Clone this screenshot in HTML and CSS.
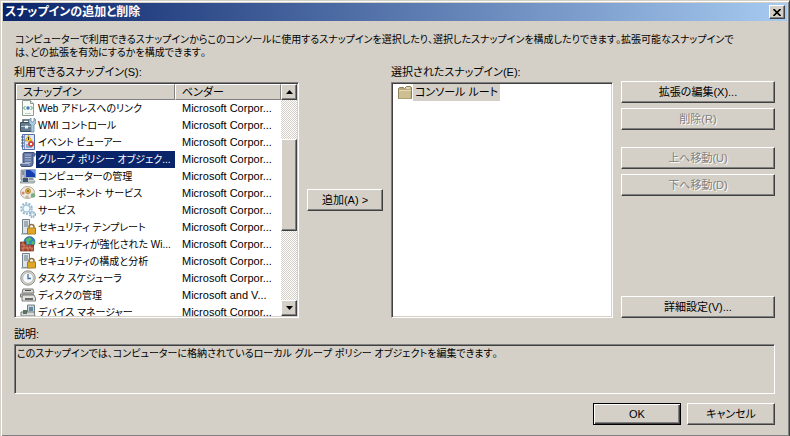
FILE: index.html
```html
<!DOCTYPE html>
<html lang="ja">
<head>
<meta charset="utf-8">
<title>スナップインの追加と削除</title>
<link rel="stylesheet" href="styles.css">
</head>
<body>
<main class="dialog">
  <header class="titlebar">
    <h1>スナップインの追加と削除</h1>
    <button class="close" type="button" aria-label="閉じる"><svg width="8" height="7" viewBox="0 0 8 7"><path d="M.5 0L7.500 7M7.500 0L.5 7" stroke="#000" stroke-width="1.600"/></svg></button>
  </header>
  <div class="content">
    <p class="intro">コンピューターで利用できるスナップインからこのコンソールに使用するスナップインを選択したり、選択したスナップインを構成したりできます。拡張可能なスナップインで<br>は、どの拡張を有効にするかを構成できます。</p>
    <div class="picker">
      <section class="available">
        <h2 id="available-label">利用できるスナップイン(S):</h2>
        <div class="sunken list">
          <div class="rows">
            <table aria-labelledby="available-label">
              <colgroup><col class="col-name"><col></colgroup>
              <thead><tr><th>スナップイン</th><th>ベンダー</th></tr></thead>
              <tbody>
                <tr><td><div class="item"><svg viewBox="0 0 16 16"><path d="M2.500.5h8l3 3v12h-11z" fill="#f7faf5" stroke="#8c9c94"/><path d="M10.500.5v3h3" fill="#dce8e0" stroke="#8c9c94"/><path d="M5.500 6L3.500 8l2 2M10.500 6l2 2-2 2" fill="none" stroke="#4b9a68"/><circle cx="8" cy="8" r="1.700" fill="#3979b8"/><path d="M5 13.500h6" stroke="#c5d1c9"/></svg><span>Web アドレスへのリンク</span></div></td><td>Microsoft Corpor...</td></tr>
                <tr><td><div class="item"><svg viewBox="0 0 16 16"><path d="M3 5V3h6v2" fill="none" stroke="#4b5963" stroke-width="1.500"/><path d="M.5 5.500h12v9H.5z" fill="#647b8e" stroke="#394c5b"/><path d="M1 9.500h11" stroke="#b6c8d4"/><path d="M5 8.500h3v3H5z" fill="#e7edf0"/><path d="M11 1v3l1.500 1L14 4V1l2 2v3l-2 2v7h-3V8L9 6V3z" fill="#a9cbe2" stroke="#587b94" stroke-width=".7"/></svg><span>WMI コントロール</span></div></td><td>Microsoft Corpor...</td></tr>
                <tr><td><div class="item"><svg viewBox="0 0 16 16"><path d="M2.500.5h12v15h-12z" fill="#dce6f7" stroke="#536fa8"/><path d="M4.500 1v14" stroke="#8097cb"/><path d="M1 3h3M1 6h3M1 9h3M1 12h3" stroke="#535f79"/><path d="M8.500 1.500L12 7H5z" fill="#ffd52d" stroke="#bc8c13" stroke-width=".7"/><path d="M8.500 3v3" stroke="#413100"/><circle cx="11" cy="10" r="3" fill="#d64536"/><path d="M10 9l2 2m0-2l-2 2" stroke="#fff"/><path d="M6 11h2M6 13h6" stroke="#466fad"/></svg><span>イベント ビューアー</span></div></td><td>Microsoft Corpor...</td></tr>
                <tr class="selected"><td><div class="item"><svg viewBox="0 0 16 16"><path d="M4 1.500h10q2 1 1 3h-2v8q0 3-3 3H1.500q-1.500-1-.5-3h2V3q0-1 1-1.500z" fill="#6577a3" stroke="#3d4f7b"/><path d="M5 4h6M5 6.500h6M5 9h6M5 11.500h6" stroke="#a7b6d2"/><path d="M1 12.500h8v2" fill="none" stroke="#b3bed4"/><path d="M13 2v3h2" fill="#8796b8" stroke="#435680"/></svg><span>グループ ポリシー オブジェク...</span></div></td><td>Microsoft Corpor...</td></tr>
                <tr><td><div class="item"><svg viewBox="0 0 16 16"><path d="M1 2h4v10H1z" fill="#bbc4ca" stroke="#67747b" stroke-width=".7"/><path d="M2 4h2M2 6h2" stroke="#4f616c"/><path d="M5.500 1.500h10v8h-10z" fill="#173eaf" stroke="#a3acb5"/><path d="M10 2h5v4z" fill="#6b96ed"/><path d="M9 10h4l1 2H8z" fill="#899aa2"/><path d="M1 13h14l-1 2H0z" fill="#cdd2d4" stroke="#6c7b81" stroke-width=".7"/><path d="M3 10h5v4H3z" fill="#41576b"/></svg><span>コンピューターの管理</span></div></td><td>Microsoft Corpor...</td></tr>
                <tr><td><div class="item"><svg viewBox="0 0 16 16"><ellipse cx="7.500" cy="7.500" rx="7" ry="6" fill="#eeeadd" stroke="#b1aa99"/><path d="M8 2v11M2 8h12" stroke="#d8d3c8"/><circle cx="8" cy="6" r="2.500" fill="#e9b748" stroke="#9e711d" stroke-width=".7"/><circle cx="8" cy="6" r="1" fill="#785b24"/><circle cx="3" cy="8" r="1.500" fill="#d88272"/><circle cx="13" cy="10.500" r="2.200" fill="#75ae81"/><circle cx="7" cy="12" r="1.500" fill="#b7b5ac"/></svg><span>コンポーネント サービス</span></div></td><td>Microsoft Corpor...</td></tr>
                <tr><td><div class="item"><svg viewBox="0 0 16 16"><circle cx="6.500" cy="6.500" r="5.300" fill="none" stroke="#93b8d0" stroke-width="2" stroke-dasharray="2 1.300"/><circle cx="6.500" cy="6.500" r="3.600" fill="#f5fafc" stroke="#9fc2d7" stroke-width="1.500"/><circle cx="12.500" cy="12.500" r="2.700" fill="#fff" stroke="#7fa7c0" stroke-width="1.500" stroke-dasharray="1.500 .7"/><circle cx="12.500" cy="12.500" r="1.500" fill="none" stroke="#9fc2d7"/></svg><span>サービス</span></div></td><td>Microsoft Corpor...</td></tr>
                <tr><td><div class="item"><svg viewBox="0 0 16 16"><path d="M2.500.5h7v14h-7z" fill="#dce3e6" stroke="#718088"/><path d="M4 3h4M4 5h4M4 7h4" stroke="#617785"/><path d="M1 15h9" stroke="#91a2aa"/><path d="M9 9V8q0-2.500 2.500-2.500T14 8v1" fill="none" stroke="#8b7448" stroke-width="1.500"/><path d="M7.500 9h8v6h-8z" fill="#efb631" stroke="#a77a1a"/><path d="M8 11h7M8 13h7" stroke="#d3961e"/></svg><span>セキュリティ テンプレート</span></div></td><td>Microsoft Corpor...</td></tr>
                <tr><td><div class="item"><svg viewBox="0 0 16 16"><circle cx="9.500" cy="6" r="5.500" fill="#2b84be" stroke="#34658c" stroke-width=".7"/><path d="M6 3l4-2 2 3-3 1 1 3-3 1z" fill="#58b967"/><path d="M12 5l3 1-2 4-2-2z" fill="#58b967"/><path d="M.5 6h5v3h8v6H.5z" fill="#a6442d" stroke="#6b291d" stroke-width=".7"/><path d="M1 9h5M1 12h12M3 6v3M7 9v3M4 9v3M10 9v3M3 12v3M8 12v3M12 12v3" stroke="#df9b7f" stroke-width=".7"/></svg><span>セキュリティが強化された Wi...</span></div></td><td>Microsoft Corpor...</td></tr>
                <tr><td><div class="item"><svg viewBox="0 0 16 16"><path d="M2.500.5h7v14h-7z" fill="#dce3e6" stroke="#718088"/><path d="M4 3h4M4 5h4M4 7h4" stroke="#617785"/><path d="M1 15h9" stroke="#91a2aa"/><path d="M9 9V8q0-2.500 2.500-2.500T14 8v1" fill="none" stroke="#8b7448" stroke-width="1.500"/><path d="M7.500 9h8v6h-8z" fill="#efb631" stroke="#a77a1a"/><path d="M8 11h7M8 13h7" stroke="#d3961e"/></svg><span>セキュリティの構成と分析</span></div></td><td>Microsoft Corpor...</td></tr>
                <tr><td><div class="item"><svg viewBox="0 0 16 16"><circle cx="8" cy="8" r="7.200" fill="#dad8cf" stroke="#8c8b86"/><circle cx="8" cy="8" r="5.400" fill="#f4f8fa" stroke="#b3b5b3"/><path d="M8 4v4.500h3" fill="none" stroke="#4672a3" stroke-width="1.300"/></svg><span>タスク スケジューラ</span></div></td><td>Microsoft Corpor...</td></tr>
                <tr><td><div class="item"><svg viewBox="0 0 16 16"><path d="M3 2h10l1 4H2z" fill="#d9d9d4" stroke="#7b7c78"/><path d="M5 3.500h6" stroke="#4d504f"/><path d="M.5 7h13v3H.5z" fill="#bfc0ba" stroke="#777974"/><path d="M2 10l1-2h11l1.500 3v3H2z" fill="#e0e0dc" stroke="#7c7f7c"/><path d="M5 12h8" stroke="#3d4445" stroke-width="1.500"/></svg><span>ディスクの管理</span></div></td><td>Microsoft and V...</td></tr>
                <tr><td><div class="item"><svg viewBox="0 0 16 16"><path d="M7.500 1h7v9h-7z" fill="#c9d2d5" stroke="#708087"/><path d="M9 3h4v4H9z" fill="#6589a1"/><path d="M1 8h13l1 4H1z" fill="#dadddc" stroke="#777f81"/><path d="M3 6h4v4H3z" fill="#56745f"/><path d="M1 13h14v2H1z" fill="#a4abad"/></svg><span>デバイス マネージャー</span></div></td><td>Microsoft Corpor...</td></tr>
              </tbody>
            </table>
          </div>
          <div class="scrollbar">
            <button class="arrow" type="button" aria-label="上へスクロール"><svg width="7" height="4" viewBox="0 0 7 4"><path d="M0 4L3.500 0 7 4z"/></svg></button>
            <div class="track"><div class="thumb"></div></div>
            <button class="arrow" type="button" aria-label="下へスクロール"><svg width="7" height="4" viewBox="0 0 7 4"><path d="M0 0L3.500 4 7 0z"/></svg></button>
          </div>
        </div>
      </section>
      <button class="push add" type="button">追加(A) &gt;</button>
      <section class="chosen">
        <h2 id="chosen-label">選択されたスナップイン(E):</h2>
        <ul class="sunken tree" aria-labelledby="chosen-label">
          <li><svg width="16" height="16" viewBox="0 0 16 16"><path d="M1.500 3.500l1-1h4l1 1 2-2h4l1 1v11h-13z" fill="#b8a878" stroke="#8e8257"/><path d="M9 3h4" stroke="#fff"/><path d="M2 5.500h11.500v8H2z" fill="#cdbf91"/><path d="M2 5.500h12" stroke="#e4dab6"/></svg><span>コンソール ルート</span></li>
        </ul>
      </section>
      <div class="actions">
        <button class="push" type="button">拡張の編集(X)...</button>
        <button class="push" type="button" disabled>削除(R)</button>
        <button class="push group" type="button" disabled>上へ移動(U)</button>
        <button class="push" type="button" disabled>下へ移動(D)</button>
        <button class="push advanced" type="button">詳細設定(V)...</button>
      </div>
    </div>
    <section class="about">
      <h2>説明:</h2>
      <p class="sunken description">このスナップインでは、コンピューターに格納されているローカル グループ ポリシー オブジェクトを編集できます。</p>
    </section>
    <footer class="buttons">
      <button class="push default" type="button">OK</button>
      <button class="push" type="button">キャンセル</button>
    </footer>
  </div>
</main>
</body>
</html>
```

FILE: styles.css
```css
* { box-sizing: border-box; }

body {
  margin: 0;
  background: #d4d0c8;
  color: #000;
  font: 11px/13px "Liberation Sans", "Noto Sans CJK JP", sans-serif;
  font-feature-settings: "palt";
}

h1, h2, p, ul { margin: 0; padding: 0; font-size: inherit; font-weight: normal; }
svg { display: block; flex: none; }

.dialog {
  display: flex;
  flex-direction: column;
  min-height: 100vh;
  padding: 1px;
  border: 1px solid;
  border-color: #d4d0c8 #404040 #404040 #d4d0c8;
  box-shadow: inset 1px 1px #fff, inset -1px -1px #808080;
}

.titlebar {
  display: flex;
  align-items: center;
  justify-content: space-between;
  height: 18px;
  margin: 1px;
  padding: 0 2px;
  background: linear-gradient(to right, #0a246a, #a6caf0);
  color: #fff;
}
.titlebar h1 { font-size: 12px; font-weight: bold; }

button {
  display: flex;
  align-items: center;
  justify-content: center;
  padding: 0;
  border: 1px solid;
  border-color: #fff #404040 #404040 #fff;
  border-radius: 0;
  background: #d4d0c8;
  box-shadow: inset -1px -1px #808080;
  color: #000;
  font: inherit;
  font-feature-settings: inherit;
}
.close { width: 16px; height: 14px; }
.push { height: 22px; white-space: nowrap; }
.push:disabled { color: #808080; text-shadow: 1px 1px #fff; }

.content {
  display: flex;
  flex: 1;
  flex-direction: column;
  padding: 11px 13px 10px 12px;
}
.intro, .description { font-size: 10px; font-kerning: none; }
.intro { padding-left: 1px; }

.picker {
  display: flex;
  flex: 1;
  gap: 8px;
  margin-top: 7px;
}
.available, .chosen { display: flex; flex-direction: column; }
.available { flex: 285; min-width: 0; }
.chosen { flex: 222; min-width: 0; }
h2 { height: 16px; }

.sunken {
  border: 1px solid;
  border-color: #808080 #fff #fff #808080;
  box-shadow: inset 1px 1px #404040, inset -1px -1px #d4d0c8;
}
.list { display: flex; flex: 1; padding: 1px; background: #fff; }
.rows { flex: 1; height: 232px; min-width: 0; overflow: hidden; }

table { width: 100%; border-collapse: separate; border-spacing: 0; table-layout: fixed; }
.col-name { width: 60%; }
th {
  height: 16px;
  padding: 0 6px;
  border: 1px solid;
  border-color: #fff #808080 #808080 #fff;
  background: #d4d0c8;
  font-weight: normal;
  line-height: 13px;
  text-align: left;
}
td { height: 17px; padding: 0; white-space: nowrap; overflow: hidden; }
td + td { padding-left: 7px; }
.item { display: flex; height: 17px; padding-left: 4px; }
.item svg { width: 16px; height: 16px; }
.item span {
  flex: 1;
  min-width: 0;
  padding-left: 2px;
  font-size: 10px;
  line-height: 17px;
  overflow: hidden;
}
.selected .item span { background: #0a246a; color: #fff; }

.scrollbar { display: flex; flex-direction: column; width: 16px; }
.arrow { height: 16px; }
.track {
  flex: 1;
  padding-top: 39px;
  background: repeating-conic-gradient(#d4d0c8 0 25%, #fff 0 50%) 0 0 / 2px 2px;
}
.thumb {
  height: 92px;
  border: 1px solid;
  border-color: #fff #404040 #404040 #fff;
  background: #d4d0c8;
  box-shadow: inset -1px -1px #808080;
}

.add { width: 76px; align-self: center; margin-top: 16px; }
.tree { flex: 1; padding: 1px 5px; background: #fff; list-style: none; }
.tree li { display: flex; align-items: center; }
.tree span { padding: 0 2px; background: #d4d0c8; line-height: 17px; }

.actions { display: flex; flex-direction: column; gap: 5px; width: 154px; padding-top: 15px; }
.group { margin-top: 12px; }
.advanced { margin-top: auto; }

.about { margin-top: 10px; }
.description { min-height: 50px; padding: 2px; }

.buttons { display: flex; justify-content: flex-end; gap: 6px; margin-top: 9px; }
.buttons .push { width: 88px; }
.default {
  border-color: #000;
  box-shadow: inset 1px 1px #fff, inset -1px -1px #404040, inset -2px -2px #808080;
}
```
